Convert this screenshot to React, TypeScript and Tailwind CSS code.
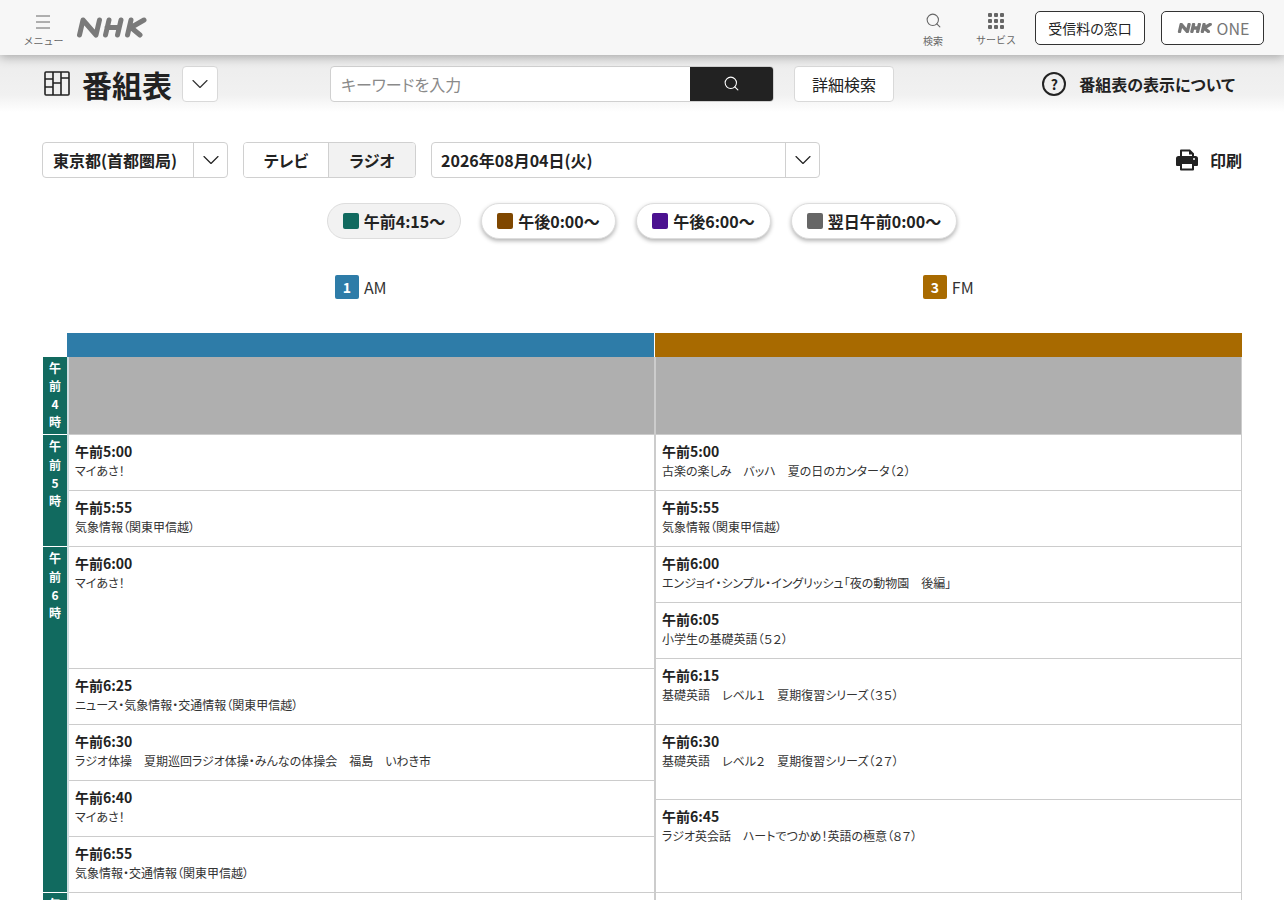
import { ChevronDown, Search } from 'lucide-react';

const FONT = "font-['Noto_Sans_CJK_JP','Noto_Sans',sans-serif] [font-feature-settings:'palt']";

interface Program {
  time: string;
  title: string;
  height: string;
}

const amPrograms: Program[] = [
  { time: '午前5:00', title: 'マイあさ！', height: 'h-[56px]' },
  { time: '午前5:55', title: '気象情報（関東甲信越）', height: 'h-[56px]' },
  { time: '午前6:00', title: 'マイあさ！', height: 'h-[122px]' },
  { time: '午前6:25', title: 'ニュース・気象情報・交通情報（関東甲信越）', height: 'h-[56px]' },
  { time: '午前6:30', title: 'ラジオ体操　夏期巡回ラジオ体操・みんなの体操会　福島　いわき市', height: 'h-[56px]' },
  { time: '午前6:40', title: 'マイあさ！', height: 'h-[56px]' },
  { time: '午前6:55', title: '気象情報・交通情報（関東甲信越）', height: 'h-[56px]' },
];

const fmPrograms: Program[] = [
  { time: '午前5:00', title: '古楽の楽しみ　バッハ　夏の日のカンタータ（２）', height: 'h-[56px]' },
  { time: '午前5:55', title: '気象情報（関東甲信越）', height: 'h-[56px]' },
  { time: '午前6:00', title: 'エンジョイ・シンプル・イングリッシュ「夜の動物園　後編」', height: 'h-[56px]' },
  { time: '午前6:05', title: '小学生の基礎英語（５２）', height: 'h-[56px]' },
  { time: '午前6:15', title: '基礎英語　レベル１　夏期復習シリーズ（３５）', height: 'h-[66px]' },
  { time: '午前6:30', title: '基礎英語　レベル２　夏期復習シリーズ（２７）', height: 'h-[75px]' },
  { time: '午前6:45', title: 'ラジオ英会話　ハートでつかめ！英語の極意（８７）', height: 'h-[93px]' },
];

const hours = [
  { chars: ['午', '前', '4', '時'], height: 'h-[78px]' },
  { chars: ['午', '前', '5', '時'], height: 'h-[112px]' },
  { chars: ['午', '前', '6', '時'], height: 'h-[346px]' },
  { chars: ['午', '前', '7', '時'], height: 'h-[100px]' },
];

const jumps = [
  { label: '午前4:15〜', color: 'bg-[#116a5f]', active: true, width: 'w-[134px]' },
  { label: '午後0:00〜', color: 'bg-[#7f4700]', active: false, width: 'w-[135px]' },
  { label: '午後6:00〜', color: 'bg-[#4b1190]', active: false, width: 'w-[135px]' },
  { label: '翌日午前0:00〜', color: 'bg-[#666666]', active: false, width: 'w-[166px]' },
];

function NhkLogo({ className, weight = 5 }: { className?: string; weight?: number }) {
  return (
    <svg viewBox="0 0 70 21" className={className} fill="none" stroke="currentColor" strokeWidth={weight} strokeLinecap="round" strokeLinejoin="round">
      <path d="M2.500 18 6 3l13 15 3.500-15" />
      <path d="M28.500 18 32 3M44 3l-3.500 15M30 10.500h12" />
      <path d="M50.500 18 54 3M67 3 54 10.500 63 18" />
    </svg>
  );
}

function ProgramCell({ program }: { program: Program }) {
  return (
    <div className={`${program.height} border-b border-[#cccccc] bg-white px-[6px] pt-[6px]`}>
      <p className="text-[14px] leading-[20px] font-bold text-[#222222]">{program.time}</p>
      <p className="mt-[1px] text-[12px] leading-[18px] whitespace-nowrap text-[#333333]">{program.title}</p>
    </div>
  );
}

export default function App() {
  return (
    <div className={`${FONT} h-screen overflow-hidden bg-white text-[#222222]`}>
      <header className="relative z-10 flex h-[55px] items-center bg-[#f7f7f7] shadow-[0_2px_10px_rgba(0,0,0,0.3)]">
        <div className="mt-[7px] ml-[24px] flex w-[39px] flex-col items-center text-[#666666]">
          <svg viewBox="0 0 14 14" className="-ml-[1px] h-[14px] w-[14px]" stroke="currentColor" strokeWidth="1">
            <path d="M0 1h14M0 7h14M0 13h14" />
          </svg>
          <span className="mt-[5px] text-[10px] leading-[14px] whitespace-nowrap [font-feature-settings:normal]">メニュー</span>
        </div>
        <NhkLogo className="ml-[14px] h-[21px] w-[70px] text-[#7a7a7a]" />
        <div className="ml-auto flex items-center">
          <div className="mt-[4px] flex w-[30px] flex-col items-center text-[#666666]">
            <Search className="h-[17px] w-[17px]" strokeWidth={1.5} />
            <span className="mt-[5px] text-[10px] leading-[14px] [font-feature-settings:normal]">検索</span>
          </div>
          <div className="mt-[4px] ml-[28px] flex w-[40px] flex-col items-center text-[#666666]">
            <svg viewBox="0 0 16 16" className="mt-[1px] h-[16px] w-[16px]" fill="currentColor">
              <rect x="0" y="0" width="4" height="4" rx="1" />
              <rect x="6" y="0" width="4" height="4" rx="1" />
              <rect x="12" y="0" width="4" height="4" rx="1" />
              <rect x="0" y="6" width="4" height="4" rx="1" />
              <rect x="6" y="6" width="4" height="4" rx="1" />
              <rect x="12" y="6" width="4" height="4" rx="1" />
              <rect x="0" y="12" width="4" height="4" rx="1" />
              <rect x="6" y="12" width="4" height="4" rx="1" />
              <rect x="12" y="12" width="4" height="4" rx="1" />
            </svg>
            <span className="mt-[4px] text-[10px] leading-[14px] whitespace-nowrap [font-feature-settings:normal]">サービス</span>
          </div>
          <div className="mt-[1px] ml-[19px] flex h-[34px] w-[110px] items-center justify-center rounded-[5px] border border-[#333333] bg-white text-[14px]">
            受信料の窓口
          </div>
          <div className="mt-[1px] mr-[20px] ml-[16px] flex h-[34px] w-[103px] items-center justify-center gap-[3px] rounded-[5px] border border-[#333333] bg-white text-[#777777]">
            <NhkLogo className="h-[10px] w-[38px]" weight={7} />
            <span className="text-[16px] leading-none">ONE</span>
          </div>
        </div>
      </header>

      <div className="flex h-[57px] items-center bg-gradient-to-b from-[#ececec] via-[#f1f1f1] via-70% to-white pr-[49px] pl-[44px]">
        <svg viewBox="0 0 26 25" className="h-[25px] w-[26px]" fill="none" stroke="#222222" strokeWidth="1.600">
          <rect x="1" y="1" width="24" height="23" rx="1" />
          <path d="M9 1v23M17 1v23M1 8h8M1 16h8M9 12h8M17 7h8" />
        </svg>
        <h1 className="ml-[12px] text-[30px] leading-[40px] font-bold">番組表</h1>
        <div className="ml-[10px] flex h-[36px] w-[36px] items-center justify-center rounded-[4px] border border-[#d9d9d9] bg-white">
          <ChevronDown className="h-[28px] w-[28px] text-[#333333]" strokeWidth={1} />
        </div>
        <div className="ml-[112px] flex h-[36px] w-[444px] overflow-hidden rounded-[4px] border border-[#d0d0d0] bg-white">
          <span className="flex-1 pt-[5px] pl-[10px] text-[16px] leading-[24px] text-[#8a8a8a]">キーワードを入力</span>
          <div className="flex w-[83px] items-center justify-center bg-[#222222]">
            <Search className="h-[17px] w-[17px] text-white" strokeWidth={1.500} />
          </div>
        </div>
        <div className="ml-[20px] flex h-[36px] w-[100px] items-center justify-center rounded-[4px] border border-[#d9d9d9] bg-white text-[16px]">
          詳細検索
        </div>
        <div className="ml-auto flex items-center">
          <div className="flex h-[24px] w-[24px] items-center justify-center rounded-full border-2 border-[#222222] text-[14px] leading-none font-bold">
            ?
          </div>
          <span className="ml-[13px] text-[16px] font-bold">番組表の表示について</span>
        </div>
      </div>

      <div className="mt-[30px] flex items-center pr-[42px] pl-[42px]">
        <div className="flex h-[36px] w-[186px] items-center rounded-[4px] border border-[#d0d0d0] bg-white">
          <span className="flex-1 pl-[10px] text-[16px] font-bold whitespace-nowrap">東京都(首都圏局)</span>
          <div className="flex h-full w-[34px] items-center justify-center border-l border-[#d0d0d0]">
            <ChevronDown className="h-[28px] w-[28px]" strokeWidth={1} />
          </div>
        </div>
        <div className="ml-[15px] flex h-[36px] w-[173px] overflow-hidden rounded-[4px] border border-[#d0d0d0] text-[16px] font-bold">
          <div className="flex w-[85px] items-center justify-center border-r border-[#d0d0d0] bg-white">テレビ</div>
          <div className="flex flex-1 items-center justify-center bg-[#f2f2f2]">ラジオ</div>
        </div>
        <div className="ml-[15px] flex h-[36px] w-[389px] items-center rounded-[4px] border border-[#d0d0d0] bg-white">
          <span className="flex-1 pl-[9px] text-[16px] font-bold">2026年08月04日(火)</span>
          <div className="flex h-full w-[34px] items-center justify-center border-l border-[#d0d0d0]">
            <ChevronDown className="h-[28px] w-[28px]" strokeWidth={1} />
          </div>
        </div>
        <div className="ml-auto flex items-center">
          <svg viewBox="0 0 22 22" className="h-[22px] w-[22px]" fill="#222222">
            <path d="M4 8V1.500a1 1 0 0 1 1-1h9l4 4V8h-2V5.500h-3V2.500H6V8z" />
            <path d="M2.500 7h17A2.500 2.500 0 0 1 22 9.500V16a1 1 0 0 1-1 1h-3v-3H4v3H1a1 1 0 0 1-1-1V9.500A2.500 2.500 0 0 1 2.500 7z" />
            <path d="M4 13h14v7.500a1 1 0 0 1-1 1H5a1 1 0 0 1-1-1zm2 2v4.500h10V15z" />
            <circle cx="18" cy="10" r="1" fill="white" />
          </svg>
          <span className="ml-[12px] text-[16px] font-bold">印刷</span>
        </div>
      </div>

      <div className="mt-[25px] flex justify-center gap-[20px]">
        {jumps.map((jump) => (
          <div
            key={jump.label}
            className={`flex h-[36px] ${jump.width} items-center justify-center gap-[5px] rounded-full border border-[#dddddd] text-[16px] font-bold whitespace-nowrap ${
              jump.active ? 'bg-[#f2f2f2]' : 'bg-white shadow-[0_2px_4px_rgba(0,0,0,0.3)]'
            }`}
          >
            <span className={`h-[16px] w-[16px] rounded-[2px] ${jump.color}`} />
            {jump.label}
          </div>
        ))}
      </div>

      <div className="mt-[36px] flex pr-[42px] pl-[67px]">
        <div className="flex flex-1 items-center justify-center gap-[5px]">
          <span className="flex h-[24px] w-[24px] items-center justify-center rounded-[2px] bg-[#2e7ca8] text-[14px] font-bold text-white">1</span>
          <span className="text-[16px] text-[#333333]">AM</span>
        </div>
        <div className="flex flex-1 items-center justify-center gap-[5px]">
          <span className="flex h-[24px] w-[24px] items-center justify-center rounded-[2px] bg-[#a86a00] text-[14px] font-bold text-white">3</span>
          <span className="text-[16px] text-[#333333]">FM</span>
        </div>
      </div>

      <div className="mt-[34px] flex pr-[42px] pl-[67px]">
        <div className="h-[24px] w-[587px] bg-[#2e7ca8]" />
        <div className="ml-[1px] h-[24px] w-[587px] bg-[#a86a00]" />
      </div>

      <div className="flex pr-[42px] pl-[43px]">
        <div className="w-[24px] shrink-0">
          {hours.map((hour, i) => (
            <div key={i} className={`${hour.height} flex flex-col items-center border-b border-white bg-[#116a5f] pt-[2px] text-white`}>
              {hour.chars.map((c, j) => (
                <span key={j} className={`text-[12px] leading-[18px] font-bold ${i > 0 && j === 0 ? 'mb-[1px]' : ''}`}>{c}</span>
              ))}
            </div>
          ))}
        </div>
        <div className="flex w-[587px] flex-col border-l-2 border-[#cfdde0]">
          <div className="h-[78px] border-b border-[#cccccc] bg-[#afafaf]" />
          {amPrograms.map((program) => (
            <ProgramCell key={program.time} program={program} />
          ))}
          <ProgramCell program={{ time: '', title: '', height: 'h-[60px]' }} />
        </div>
        <div className="flex flex-1 flex-col border-r border-l-2 border-r-[#cccccc] border-l-[#cccccc]">
          <div className="h-[78px] border-b border-[#cccccc] bg-[#afafaf]" />
          {fmPrograms.map((program) => (
            <ProgramCell key={program.time} program={program} />
          ))}
          <ProgramCell program={{ time: '', title: '', height: 'h-[60px]' }} />
        </div>
      </div>
    </div>
  );
}
